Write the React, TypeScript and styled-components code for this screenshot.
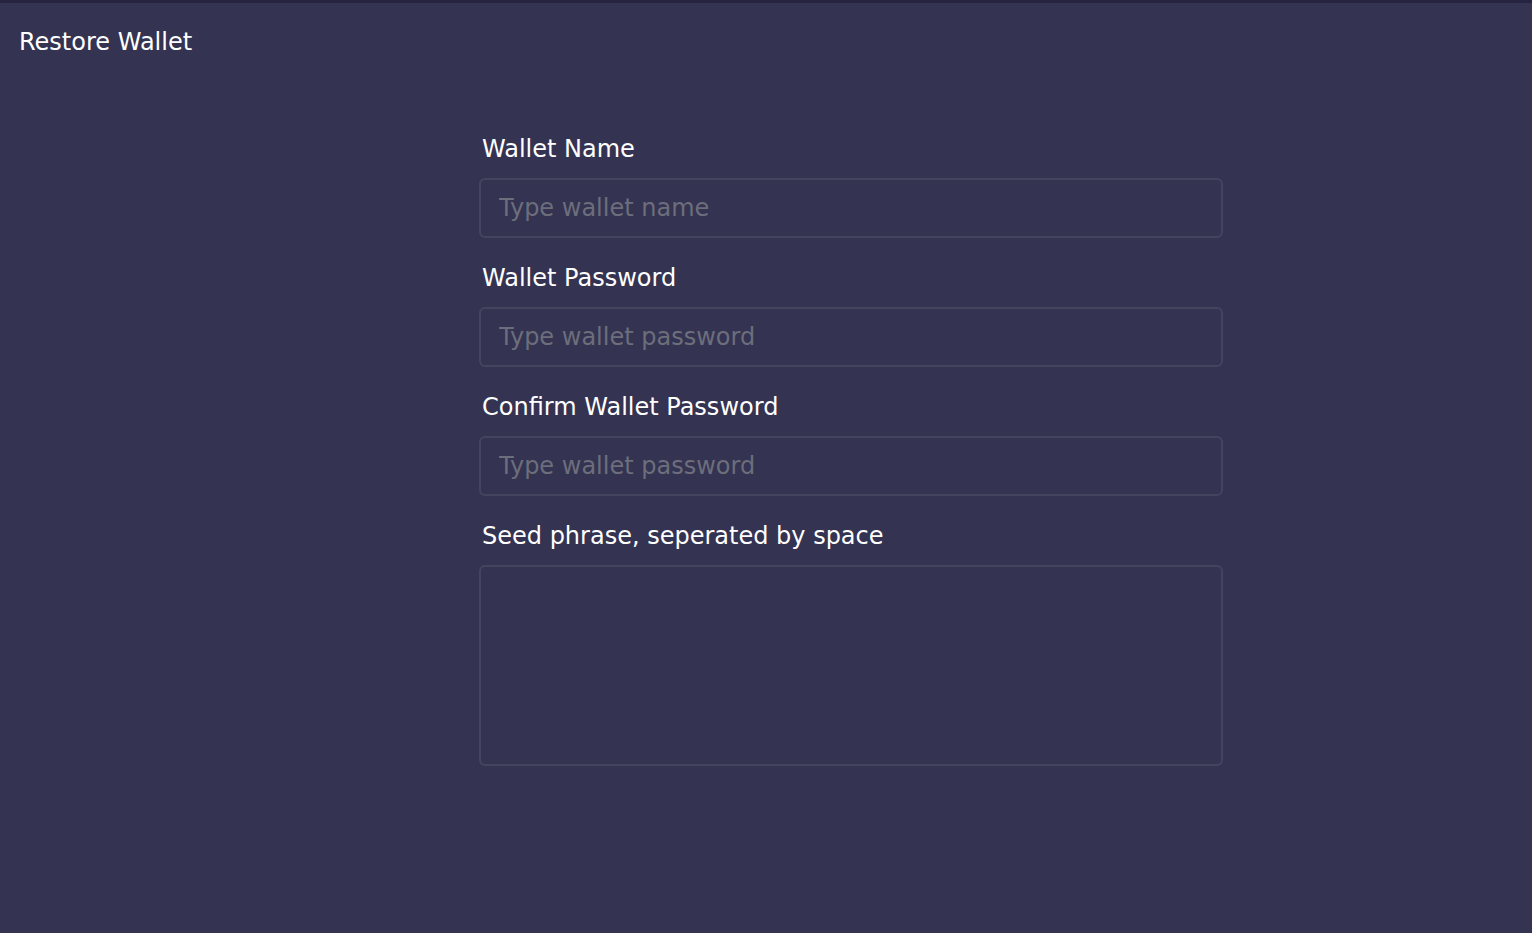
import React from "react";
import styled, { createGlobalStyle } from "styled-components";

const Global = createGlobalStyle`
  html, body { margin: 0; padding: 0; background: #343352; }
  body { font-family: "DejaVu Sans", Verdana, sans-serif; }
  * { box-sizing: border-box; }
`;

const Page = styled.div`
  min-height: 933px;
  background: #343352;
  border-top: 3px solid #25233f;
  color: #ffffff;
`;

const Title = styled.h1`
  margin: 0;
  padding: 24px 0 0 19px;
  font-size: 24px;
  font-weight: 400;
  line-height: 30px;
`;

const Form = styled.form`
  width: 744px;
  margin: 77px 0 0 479px;
  display: flex;
  flex-direction: column;
  gap: 25px;
`;

const Field = styled.div`
  display: flex;
  flex-direction: column;
  gap: 14px;
`;

const Label = styled.label`
  display: block;
  padding-left: 3px;
  font-size: 24px;
  line-height: 30px;
`;

const Input = styled.input`
  width: 100%;
  height: 60px;
  background: transparent;
  border: 2px solid #45445f;
  border-radius: 6px;
  padding: 0 18px;
  font-family: inherit;
  font-size: 24px;
  color: #fff;
  outline: none;
  &::placeholder { color: #6c6e7b; }
`;

const TextArea = styled.textarea`
  width: 100%;
  height: 201px;
  background: transparent;
  border: 2px solid #45445f;
  border-radius: 6px;
  padding: 14px 18px;
  font-family: inherit;
  font-size: 24px;
  color: #fff;
  resize: none;
  outline: none;
  display: block;
`;

export default function App() {
  return (
    <Page>
      <Global />
      <Title>Restore Wallet</Title>
      <Form>
        <Field>
          <Label>Wallet Name</Label>
          <Input placeholder="Type wallet name" />
        </Field>
        <Field>
          <Label>Wallet Password</Label>
          <Input type="password" placeholder="Type wallet password" />
        </Field>
        <Field>
          <Label>Confirm Wallet Password</Label>
          <Input type="password" placeholder="Type wallet password" />
        </Field>
        <Field>
          <Label>Seed phrase, seperated by space</Label>
          <TextArea />
        </Field>
      </Form>
    </Page>
  );
}
